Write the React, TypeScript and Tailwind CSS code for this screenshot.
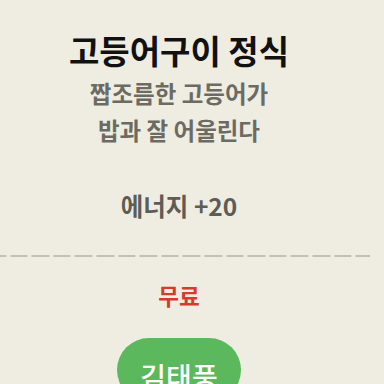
import React from "react";

export default function App() {
  return (
    <div
      className="w-[384px] h-[384px] overflow-hidden bg-[#efede1] flex flex-col"
      style={{ fontFamily: '"Noto Sans CJK KR", "Noto Sans", sans-serif' }}
    >
      <div className="w-[358px] flex flex-col items-center">
        <h1 className="mt-[29px] text-[33px] leading-[42px] font-bold text-[#111111]">고등어구이 정식</h1>
        <p className="mt-[4px] text-[23.5px] leading-[37px] font-semibold text-[#6c6b63] text-center">
          짭조름한 고등어가
          <br />
          밥과 잘 어울린다
        </p>
        <p className="mt-[41px] text-[24.5px] leading-[32px] font-bold text-[#5d5c56]">에너지 +20</p>
      </div>
      <div className="mt-[33px] h-[2px] w-[370px] shrink-0 bg-[repeating-linear-gradient(to_right,#c2c1b6_0px,#c2c1b6_17.5px,transparent_17.5px,transparent_21.6px)] bg-[position:-11.6px_0]" />
      <div className="w-[358px] flex flex-col items-center">
        <p className="mt-[23px] text-[22.5px] leading-[30px] font-bold text-[#d63a2f]">무료</p>
        <button className="mt-[28px] w-[124px] h-[64px] shrink-0 rounded-full bg-[#5cb85c] text-white text-[28px] font-medium flex items-start justify-center pt-[17px]">
          김태풍
        </button>
      </div>
    </div>
  );
}
